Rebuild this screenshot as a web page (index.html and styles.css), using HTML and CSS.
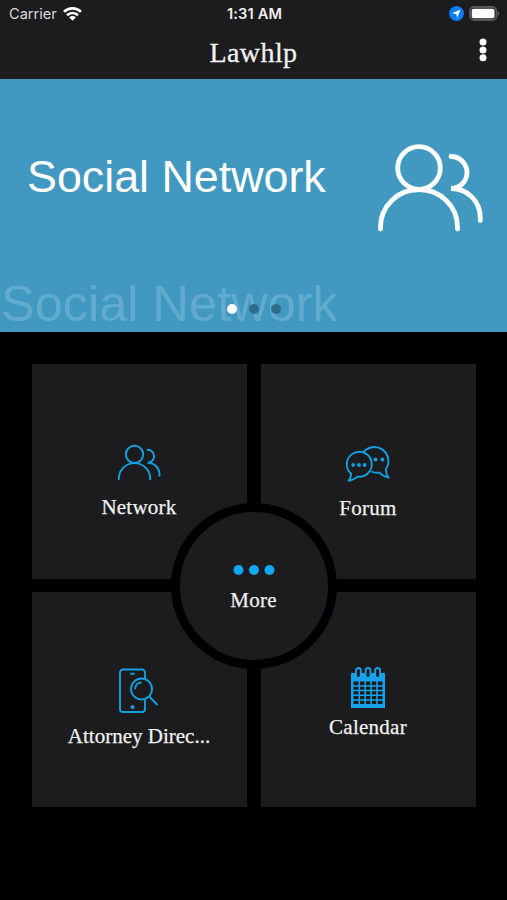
FILE: index.html
```html
<!DOCTYPE html>
<html lang="en">
<head>
<meta charset="utf-8">
<title>Lawhlp</title>
<link rel="stylesheet" href="styles.css">
</head>
<body>
<header class="top">
  <div class="status">
    <div class="carrier"><span>Carrier</span>
      <svg width="19" height="14" viewBox="0 0 19 14" fill="none" stroke="#fff" stroke-width="2.6"><path d="M1 4.800a12.200 12.200 0 0 1 17 0M4 8.200a7.900 7.900 0 0 1 11 0"/><path d="M6.200 10.400a4.600 4.600 0 0 1 6.600 0L9.500 13.800z" fill="#fff" stroke="none"/></svg>
    </div>
    <div class="time">1:31 AM</div>
    <div class="power">
      <svg width="15" height="15" viewBox="0 0 15 15"><circle cx="7.500" cy="7.500" r="7.500" fill="#0a7cf8"/><path d="M11.600 3.500 8.100 11.900 7.300 7.900 3 7.200z" fill="#fff"/></svg>
      <svg width="31" height="15" viewBox="0 0 31 15"><rect x="1" y="1" width="26.400" height="13" rx="4" fill="none" stroke="#59595b" stroke-width="1.800"/><rect x="2.700" y="2.700" width="22.800" height="9.600" rx="2" fill="#fff"/><path d="M28.600 5.200q1.600.8 1.600 2.300t-1.600 2.300z" fill="#69696b"/></svg>
    </div>
  </div>
  <div class="bar">
    <h1 class="title">Lawhlp</h1>
    <svg class="menu" width="8" height="24" viewBox="0 0 8 24" fill="#fff"><circle cx="4" cy="4" r="3.500"/><circle cx="4" cy="12" r="3.500"/><circle cx="4" cy="19.800" r="3.500"/></svg>
  </div>
</header>
<section class="banner">
  <div class="headline">Social Network</div>
  <svg class="people" width="108" height="90" viewBox="0 0 108 90"><g fill="none" stroke="#fff" stroke-width="4.800" stroke-linecap="round"><circle cx="43" cy="25" r="21.300"/><path d="M4.500 86v-2a38.500 37.500 0 0 1 77 0v2M75 13.500a16 16 0 0 1 0 32c17 0 29.300 13 29.300 29.500v2.500"/></g></svg>
  <div class="echo">Social Network</div>
  <div class="dots"><i class="dot on"></i><i class="dot"></i><i class="dot"></i></div>
</section>
<main class="grid">
  <div class="card">
    <svg class="icon" width="44" height="37" viewBox="0 0 108 90"><g fill="none" stroke="#149fdf" stroke-width="4.800" stroke-linecap="round"><circle cx="43" cy="25" r="21.300"/><path d="M4.500 86v-2a38.500 37.500 0 0 1 77 0v2M75 13.500a16 16 0 0 1 0 32c17 0 29.300 13 29.300 29.500v2.500"/></g></svg>
    <span class="label">Network</span>
  </div>
  <div class="card">
    <svg class="icon" width="46" height="38" viewBox="0 0 46 38" fill="none" stroke="#149fdf" stroke-width="1.900" stroke-linejoin="round"><path d="M17.800 9A13.800 13.800 0 1 1 40.800 25.300Q41.200 30.500 43.600 33.600Q37.500 32 34.600 28.600Q30.300 29.300 26.200 27.500"/><path d="M6.200 29.800A12.500 12.500 0 1 1 12.300 32.600Q9.400 35.800 3.600 36.800Q6 33.500 6.200 29.800z"/><g fill="#149fdf" stroke="none"><circle cx="8.200" cy="21" r="1.900"/><circle cx="14" cy="21" r="1.900"/><circle cx="19.600" cy="21" r="1.900"/><circle cx="30.500" cy="15.500" r="1.900"/><circle cx="37.500" cy="15.500" r="1.900"/></g></svg>
    <span class="label">Forum</span>
  </div>
  <div class="card">
    <svg class="icon" width="40" height="46" viewBox="0 0 40 46" fill="none" stroke="#149fdf" stroke-width="1.900" stroke-linecap="round"><path d="M26 10V4.500A3 3 0 0 0 23 1.500H4A3 3 0 0 0 1 4.500V41A3 3 0 0 0 4 44H23A3 3 0 0 0 26 41V32M12 5.700h3"/><circle cx="22.500" cy="21" r="10.500"/><path d="M16.300 20.500a6.200 6.200 0 0 1 5.500-6M30.300 28.500 38 36.500" /><circle cx="13.500" cy="39" r="2" fill="#149fdf" stroke="none"/></svg>
    <span class="label">Attorney Direc...</span>
  </div>
  <div class="card">
    <svg class="icon" width="36" height="41" viewBox="0 0 36 41"><path d="M1 6h34v35H1z" fill="#15a3ee"/><path d="M3.500 14.500h29v22.500h-29z" fill="#1c1c1e"/><path d="M3 18.900h30M3 23.600h30M3 28.300h30M3 33h30M9.300 14v24M15.200 14v24M21.100 14v24M27 14v24" stroke="#15a3ee" stroke-width="1.500"/><g fill="#1c1c1e" stroke="#15a3ee" stroke-width="1.800"><rect x="6" y="1" width="4.800" height="10" rx="2.400"/><rect x="15.600" y="1" width="4.800" height="10" rx="2.400"/><rect x="25.200" y="1" width="4.800" height="10" rx="2.400"/></g></svg>
    <span class="label">Calendar</span>
  </div>
  <div class="more">
    <svg width="42" height="10" viewBox="0 0 42 10" fill="#10a8f5"><circle cx="5.500" cy="5" r="5"/><circle cx="21" cy="5" r="5"/><circle cx="36.500" cy="5" r="5"/></svg>
    <span class="label">More</span>
  </div>
</main>
</body>
</html>
```
FILE: styles.css
```css
* { box-sizing: border-box; }
body {
  margin: 0;
  height: 900px;
  background: #000;
  color: #f0f0f0;
  font-family: "Liberation Serif", serif;
}
svg { display: block; }
.top {
  height: 79px;
  background: #1c1c1e;
}
.status {
  display: grid;
  grid-template-columns: 1fr auto 1fr;
  align-items: center;
  height: 27px;
  padding: 0 7px 0 9px;
  font-family: Inter, sans-serif;
}
.carrier, .power {
  display: flex;
  align-items: center;
  gap: 6px;
}
.carrier { color: #d8d8d8; font-size: 14.6px; }
.power { justify-content: flex-end; gap: 5px; }
.time { font-weight: 600; font-size: 14.6px; letter-spacing: .15px; }
.bar {
  display: grid;
  grid-template-columns: 1fr auto 1fr;
  height: 52px;
  padding: 0 20px;
}
.title {
  grid-column: 2;
  margin: 0;
  font-size: 28px;
  font-weight: 400;
  line-height: 52px;
  letter-spacing: .4px;
  -webkit-text-stroke: .3px currentColor;
}
.menu { justify-self: end; margin-top: 11px; }
.banner {
  position: relative;
  display: flex;
  justify-content: space-between;
  height: 253px;
  padding: 0 23px 0 27px;
  overflow: hidden;
  background: #4199c1;
  font-family: "Liberation Sans", sans-serif;
}
.headline {
  margin-top: 71px;
  color: #fff;
  font-size: 44.8px;
  line-height: 52px;
  white-space: nowrap;
}
.people { margin-top: 64px; }
.echo {
  position: absolute;
  left: 1px;
  bottom: 0;
  font-size: 50.5px;
  line-height: 56px;
  color: #62abce;
  white-space: nowrap;
}
.dots {
  position: absolute;
  left: 227px;
  bottom: 18px;
  display: flex;
  gap: 12px;
}
.dot {
  width: 10px;
  height: 10px;
  border-radius: 50%;
  background: #2d6c8a;
}
.dot.on { background: #fff; }
.grid {
  position: relative;
  display: grid;
  grid-template-columns: 215px 215px;
  grid-template-rows: 215px 215px;
  gap: 13px 14px;
  width: 444px;
  margin: 31.5px auto 0;
}
.card {
  display: flex;
  flex-direction: column;
  align-items: center;
  justify-content: center;
  gap: 13px;
  padding-top: 22px;
  background: #1c1c1e;
}
.card:nth-child(n+3) { gap: 9px; padding-top: 18px; }
.card:nth-child(4) { gap: 6px; padding-top: 9px; }
.label {
  font-size: 21px;
  line-height: 26px;
  letter-spacing: .25px;
  -webkit-text-stroke: .25px currentColor;
}
.card:nth-child(3) .label { letter-spacing: 0; }
.more {
  position: absolute;
  left: 139px;
  top: 139px;
  width: 166px;
  height: 166px;
  padding-top: 7px;
  border: 9.5px solid #000;
  border-radius: 50%;
  background: #1c1c1e;
  display: flex;
  flex-direction: column;
  align-items: center;
  justify-content: center;
  gap: 12px;
}
```
